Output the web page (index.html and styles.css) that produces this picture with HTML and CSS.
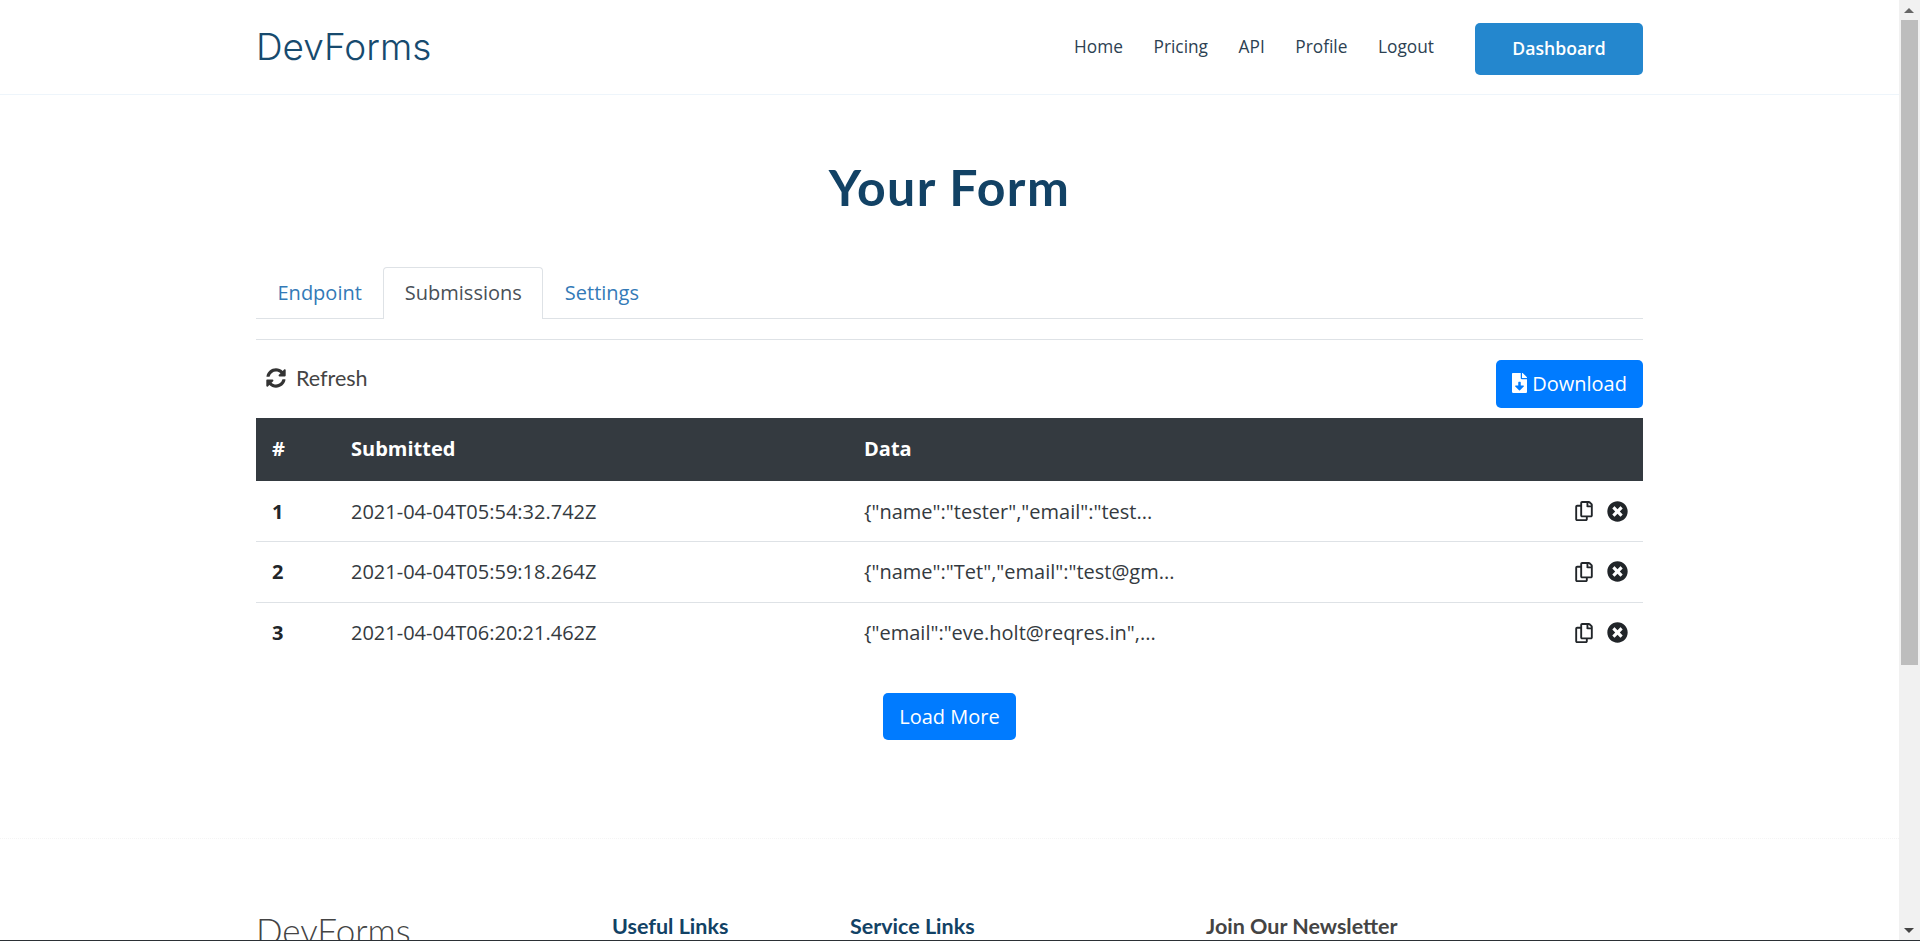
FILE: index.html
```html
<!DOCTYPE html>
<html lang="en">
<head>
    <meta charset="UTF-8">
    <title>Your Form - DevForms</title>
    <link rel="stylesheet" href="styles.css">
</head>
<body>
    <svg class="icon-defs">
        <symbol id="i-copy" viewBox="0 0 448 512"><path d="M433.941 65.941l-51.882-51.882A48 48 0 0 0 348.118 0H176c-26.510 0-48 21.490-48 48v48H48c-26.510 0-48 21.490-48 48v320c0 26.510 21.490 48 48 48h224c26.510 0 48-21.490 48-48v-48h80c26.510 0 48-21.490 48-48V99.882a48 48 0 0 0-14.059-33.941zM266 464H54a6 6 0 0 1-6-6V150a6 6 0 0 1 6-6h74v224c0 26.510 21.490 48 48 48h96v42a6 6 0 0 1-6 6zm128-96H182a6 6 0 0 1-6-6V54a6 6 0 0 1 6-6h106v88c0 13.255 10.745 24 24 24h88v202a6 6 0 0 1-6 6zm6-256h-64V48h9.632c1.591 0 3.117.632 4.243 1.757l48.368 48.368a6 6 0 0 1 1.757 4.243V112z"/></symbol>
        <symbol id="i-close" viewBox="0 0 512 512"><path d="M256 8C119 8 8 119 8 256s111 248 248 248 248-111 248-248S393 8 256 8zm121.600 313.100c4.700 4.700 4.700 12.300 0 17L338 377.600c-4.700 4.700-12.300 4.700-17 0L256 312l-65.100 65.600c-4.700 4.700-12.300 4.700-17 0L134.400 338c-4.700-4.700-4.700-12.300 0-17l65.600-65-65.600-65.100c-4.700-4.700-4.700-12.300 0-17l39.600-39.600c4.700-4.700 12.300-4.700 17 0l65 65.700 65.100-65.600c4.700-4.700 12.300-4.700 17 0l39.600 39.600c4.700 4.700 4.700 12.300 0 17L312 256l65.600 65.100z"/></symbol>
    </svg>

    <div class="window">
        <div class="page">
            <header class="site-header">
                <div class="container header-row">
                    <a class="logo" href="#">DevForms</a>
                    <nav class="main-nav">
                        <a href="#">Home</a>
                        <a href="#">Pricing</a>
                        <a href="#">API</a>
                        <a href="#">Profile</a>
                        <a href="#">Logout</a>
                    </nav>
                    <a class="btn-dashboard" href="#">Dashboard</a>
                </div>
            </header>

            <main class="container content">
                <h1 class="page-title">Your Form</h1>

                <ul class="tabs">
                    <li><a href="#">Endpoint</a></li>
                    <li class="active"><a href="#">Submissions</a></li>
                    <li><a href="#">Settings</a></li>
                </ul>
                <hr class="rule">

                <div class="toolbar">
                    <a class="refresh" href="#">
                        <svg class="icon-refresh" viewBox="0 0 512 512"><path d="M370.72 133.28C339.458 104.008 298.888 87.962 255.848 88c-77.458.068-144.328 53.178-162.791 126.85-1.344 5.363-6.122 9.15-11.651 9.15H24.103c-7.498 0-13.194-6.807-11.807-14.176C33.933 94.924 134.813 8 256 8c66.448 0 126.791 26.136 171.315 68.685L463.03 40.97C478.149 25.851 504 36.559 504 57.941V192c0 13.255-10.745 24-24 24H345.941c-21.382 0-32.09-25.851-16.971-40.971l41.75-41.749zM32 296h134.059c21.382 0 32.09 25.851 16.971 40.971l-41.75 41.75c31.262 29.273 71.835 45.319 114.876 45.28 77.418-.07 144.315-53.144 162.787-126.849 1.344-5.363 6.122-9.15 11.651-9.15h57.304c7.498 0 13.194 6.807 11.807 14.176C478.067 417.076 377.187 504 256 504c-66.448 0-126.791-26.136-171.315-68.685L48.97 471.03C33.851 486.149 8 475.441 8 454.059V320c0-13.255 10.745-24 24-24z"/></svg>
                        Refresh
                    </a>
                    <a class="btn-primary btn-download" href="#">
                        <svg class="icon-file" viewBox="0 0 384 512"><path d="M224 136V0H24C10.700 0 0 10.700 0 24v464c0 13.300 10.700 24 24 24h336c13.300 0 24-10.700 24-24V160H248c-13.200 0-24-10.800-24-24zm76.450 211.360l-96.420 95.700c-6.650 6.610-17.390 6.610-24.040 0l-96.420-95.700C73.420 337.290 80.540 320 94.820 320H160v-80c0-8.840 7.160-16 16-16h32c8.840 0 16 7.160 16 16v80h65.180c14.280 0 21.400 17.290 11.270 27.360zM377 105L279.100 7c-4.500-4.500-10.600-7-17-7H256v128h128v-6.100c0-6.300-2.500-12.400-7-16.900z"/></svg>
                        Download
                    </a>
                </div>

                <table class="subs-table">
                    <thead>
                        <tr>
                            <th class="col-num">#</th>
                            <th class="col-date">Submitted</th>
                            <th>Data</th>
                            <th class="col-actions"></th>
                        </tr>
                    </thead>
                    <tbody>
                        <tr>
                            <th class="col-num">1</th>
                            <td>2021-04-04T05:54:32.742Z</td>
                            <td>{"name":"tester","email":"test...</td>
                            <td class="col-actions">
                                <div class="actions">
                                    <svg class="icon-copy"><use href="#i-copy"/></svg>
                                    <svg class="icon-close"><use href="#i-close"/></svg>
                                </div>
                            </td>
                        </tr>
                        <tr>
                            <th class="col-num">2</th>
                            <td>2021-04-04T05:59:18.264Z</td>
                            <td>{"name":"Tet","email":"test@gm...</td>
                            <td class="col-actions">
                                <div class="actions">
                                    <svg class="icon-copy"><use href="#i-copy"/></svg>
                                    <svg class="icon-close"><use href="#i-close"/></svg>
                                </div>
                            </td>
                        </tr>
                        <tr>
                            <th class="col-num">3</th>
                            <td>2021-04-04T06:20:21.462Z</td>
                            <td>{"email":"eve.holt@reqres.in",...</td>
                            <td class="col-actions">
                                <div class="actions">
                                    <svg class="icon-copy"><use href="#i-copy"/></svg>
                                    <svg class="icon-close"><use href="#i-close"/></svg>
                                </div>
                            </td>
                        </tr>
                    </tbody>
                </table>

                <div class="load-row">
                    <a class="btn-primary btn-load" href="#">Load More</a>
                </div>
            </main>

            <footer class="site-footer">
                <div class="container footer-row">
                    <div class="foot-logo">DevForms</div>
                    <h4 class="foot-useful">Useful Links</h4>
                    <h4 class="foot-service">Service Links</h4>
                    <h4 class="foot-news">Join Our Newsletter</h4>
                </div>
            </footer>
        </div>

        <div class="scrollbar">
            <div class="arrow-up"></div>
            <div class="thumb"></div>
            <div class="arrow-down"></div>
        </div>
    </div>
</body>
</html>
```

FILE: styles.css
```css
* {
    margin: 0;
    padding: 0;
    box-sizing: border-box;
}

html, body {
    height: 941px;
    overflow: hidden;
}

body {
    font-family: "Open Sans", sans-serif;
    font-size: 20px;
    color: #212529;
    background: #fff;
    border-bottom: 1px solid #2b3035;
}

a {
    text-decoration: none;
}

.icon-defs {
    display: none;
}

.window {
    display: flex;
    height: 940px;
}

.page {
    flex: 1;
    min-width: 0;
    overflow: hidden;
}

.container {
    width: 1387px;
    margin: 0 auto;
}

/* header */
.site-header {
    height: 95px;
    border-bottom: 1px solid #eef5fb;
}

.header-row {
    display: flex;
    align-items: center;
    height: 94px;
}

.logo {
    font-family: "Inter", sans-serif;
    font-weight: 300;
    font-size: 37px;
    color: #174a6e;
    margin-right: auto;
    margin-top: -2px;
}

.main-nav {
    display: flex;
    gap: 30.6px;
    margin-right: 41px;
    margin-top: -1px;
}

.main-nav a {
    font-size: 17.3px;
    color: #2c4152;
}

.btn-dashboard {
    width: 168px;
    height: 52px;
    margin-top: 4px;
    line-height: 50px;
    text-align: center;
    font-size: 17.6px;
    font-weight: 600;
    color: #fff;
    background: #2487ce;
    border-radius: 5px;
}

/* title and tabs */
.page-title {
    font-family: "Lato", sans-serif;
    font-weight: 700;
    font-size: 50px;
    letter-spacing: 1.4px;
    line-height: 64px;
    color: #124265;
    text-align: center;
    margin-top: 60px;
}

.tabs {
    display: flex;
    list-style: none;
    margin-top: 48px;
    border-bottom: 1px solid #dee2e6;
}

.tabs li {
    margin-bottom: -1px;
}

.tabs a {
    display: block;
    height: 52px;
    line-height: 50px;
    padding: 0 20.5px;
    font-size: 20px;
    color: #337ab7;
    border: 1px solid transparent;
    border-bottom: 0;
}

.tabs .active a {
    color: #495057;
    background: #fff;
    border-color: #dee2e6;
    border-radius: 4px 4px 0 0;
}

.rule {
    border: 0;
    border-top: 1px solid #dee2e6;
    margin-top: 20px;
}

/* refresh, download */
.toolbar {
    display: flex;
    justify-content: space-between;
    align-items: flex-start;
    height: 78px;
    padding-top: 20px;
}

.refresh {
    display: flex;
    align-items: center;
    font-family: "Lato", sans-serif;
    font-size: 21.5px;
    color: #444;
    padding: 5px 0 0 10px;
}

.icon-refresh {
    width: 20px;
    height: 20px;
    fill: #333;
    margin-right: 10px;
}

.btn-primary {
    display: inline-block;
    color: #fff;
    background: #007bff;
    border-radius: 5px;
    font-size: 20px;
}

.btn-download {
    display: flex;
    align-items: center;
    justify-content: center;
    width: 147px;
    height: 48px;
    padding-bottom: 2px;
    gap: 5px;
}

.icon-file {
    width: 15px;
    height: 20px;
    fill: #fff;
}

/* table */
.subs-table {
    width: 100%;
    border-collapse: collapse;
    font-size: 20px;
}

.subs-table thead th {
    height: 63px;
    background: #343a40;
    color: #fff;
    text-align: left;
    padding: 0 16px 3px;
}

.subs-table tbody th,
.subs-table tbody td {
    height: 60.5px;
    text-align: left;
    padding: 0 16px;
    color: #343a40;
    border-top: 1px solid #dee2e6;
}

.subs-table tbody th {
    color: #212529;
}

.subs-table tbody tr:first-child th,
.subs-table tbody tr:first-child td {
    border-top: 0;
}

.col-num {
    width: 79px;
}

.subs-table th.col-date {
    width: 513px;
}

.subs-table .col-actions {
    width: 120px;
    padding-right: 15px;
}

.actions {
    display: flex;
    justify-content: flex-end;
    align-items: center;
    gap: 14px;
}

.icon-copy {
    width: 18px;
    height: 20px;
    fill: #212529;
}

.icon-close {
    width: 21px;
    height: 21px;
    fill: #212529;
}

/* load more */
.load-row {
    display: flex;
    justify-content: center;
    margin-top: 30px;
}

.btn-load {
    width: 133px;
    height: 47px;
    line-height: 47px;
    text-align: center;
}

/* footer */
.site-footer {
    margin-top: 98px;
    border-top: 1px dotted #f4f4f4;
}

.footer-row {
    display: flex;
    padding-top: 74px;
}

.foot-logo {
    font-family: "Lato", sans-serif;
    font-weight: 300;
    font-size: 35px;
    color: #444;
    width: 356px;
    margin-top: -4px;
}

.site-footer h4 {
    font-family: "Lato", sans-serif;
    font-weight: 700;
    font-size: 21.5px;
    color: #124265;
}

.foot-useful {
    width: 238px;
}

.foot-service {
    width: 356px;
}

.site-footer .foot-news {
    color: #444;
}

/* browser scrollbar in the picture */
.scrollbar {
    width: 21px;
    background: #f1f1f1;
    position: relative;
    flex: none;
}

.thumb {
    position: absolute;
    top: 20px;
    left: 2px;
    right: 2px;
    height: 645px;
    background: #bdbdbd;
}

.arrow-up {
    position: absolute;
    top: 8px;
    left: 5px;
    border: 5px solid transparent;
    border-top: 0;
    border-bottom: 5px solid #666;
}

.arrow-down {
    position: absolute;
    bottom: 7px;
    left: 5px;
    border: 5px solid transparent;
    border-bottom: 0;
    border-top: 5px solid #444;
}
```
